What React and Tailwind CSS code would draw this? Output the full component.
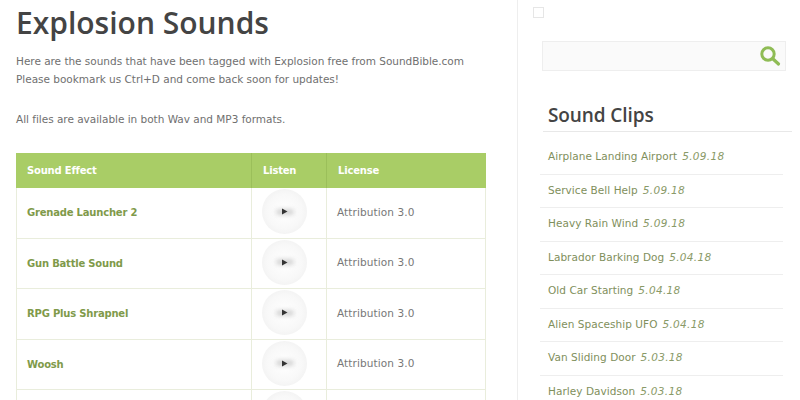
const rows = ["Grenade Launcher 2", "Gun Battle Sound", "RPG Plus Shrapnel", "Woosh", ""];
const clips = [
  ["Airplane Landing Airport", "5.09.18"],
  ["Service Bell Help", "5.09.18"],
  ["Heavy Rain Wind", "5.09.18"],
  ["Labrador Barking Dog", "5.04.18"],
  ["Old Car Starting", "5.04.18"],
  ["Alien Spaceship UFO", "5.04.18"],
  ["Van Sliding Door", "5.03.18"],
  ["Harley Davidson", "5.03.18"],
];

function Play() {
  return (
    <div className="relative w-[45px] h-[45px] rounded-full bg-[radial-gradient(circle,#ffffff_0%,#f8f8f8_55%,#ececec_100%)] flex items-center justify-center">
      <div className="absolute w-[18px] h-[6px] rounded-full bg-[#d4d4d4] blur-[2px]" />
      <svg className="relative" width="7" height="7" viewBox="0 0 7 7"><path d="M1 0.5 L6.5 3.5 L1 6.5 Z" fill="#333" /></svg>
    </div>
  );
}

export default function App() {
  return (
    <div className="h-[400px] w-[800px] overflow-hidden bg-white flex font-['DejaVu_Sans',sans-serif]">
      <div className="w-[518px] shrink-0 border-r border-[#eeeeee] pl-4">
        <h1 className="text-[30px] leading-[40px] mt-[3px] font-semibold text-[#444444] font-['Open_Sans',sans-serif] whitespace-nowrap">Explosion Sounds</h1>
        <div className="mt-[9px] text-[10.5px] leading-[18px] text-[#707070] whitespace-nowrap tracking-[-0.02px]">
          <p>Here are the sounds that have been tagged with Explosion free from SoundBible.com</p>
          <p>Please bookmark us Ctrl+D and come back soon for updates!</p>
          <p className="mt-[22px]">All files are available in both Wav and MP3 formats.</p>
        </div>
        <div className="mt-[25px] w-[470px] text-[10px]">
          <div className="flex h-[35px] bg-[#a9cd66] text-white font-bold items-center tracking-[-0.2px]">
            <div className="w-[236px] h-full flex items-center pl-[11px] border-r border-[#9bbf5a]">Sound Effect</div>
            <div className="w-[75px] h-full flex items-center pl-[11px] border-r border-[#9bbf5a]">Listen</div>
            <div className="flex-1 pl-[11px]">License</div>
          </div>
          {rows.map((r, i) => (
            <div key={i} className="flex h-[50.5px] border-b border-x border-[#e9eddc] items-stretch">
              <div className="w-[235px] flex items-center pl-[10px] border-r border-[#e9eddc] font-bold text-[#7f9a4a] tracking-[-0.2px]">{r}</div>
              <div className="w-[75px] flex items-start pt-[1px] pl-[10px] border-r border-[#e9eddc]"><Play /></div>
              <div className="flex-1 flex items-center pl-[10px] text-[10.5px] text-[#777777] tracking-[0.1px]">{r ? "Attribution 3.0" : ""}</div>
            </div>
          ))}
        </div>
      </div>
      <div className="flex-1 pl-[15px]">
        <div className="mt-[7px] w-[11px] h-[11px] border border-[#e6e6e6]" />
        <div className="mt-[23px] ml-[9px] w-[244px] h-[30px] bg-[#fafafa] border border-[#eeeeee] flex items-center justify-end pr-[4px]">
          <svg width="22" height="22" viewBox="0 0 22 22" fill="none">
            <circle cx="9" cy="9" r="6.2" stroke="#8fbc55" strokeWidth="3" />
            <path d="M13.8 13.8 L19.5 19" stroke="#8fbc55" strokeWidth="3.2" strokeLinecap="round" />
          </svg>
        </div>
        <div className="ml-[10px] mt-[23px] w-[249px] border-b border-[#e8e8e8] pl-[5px] pt-[4px] h-[38px] text-[19px] leading-[35px] font-semibold text-[#444444] font-['Open_Sans',sans-serif] tracking-[-0.1px]">Sound Clips</div>
        <div className="ml-[7px] w-[243px] pt-[9px]">
          {clips.map(([t, d]) => (
            <div key={t} className="h-[33.5px] border-b border-[#eeeeee] pl-[8px] flex items-center text-[10.5px] text-[#7f8f5c] whitespace-nowrap tracking-[0.05px]">
              <span>{t}</span>
              <i className="ml-[5px] text-[#8a9a68] tracking-[0.3px]">{d}</i>
            </div>
          ))}
        </div>
      </div>
    </div>
  );
}
